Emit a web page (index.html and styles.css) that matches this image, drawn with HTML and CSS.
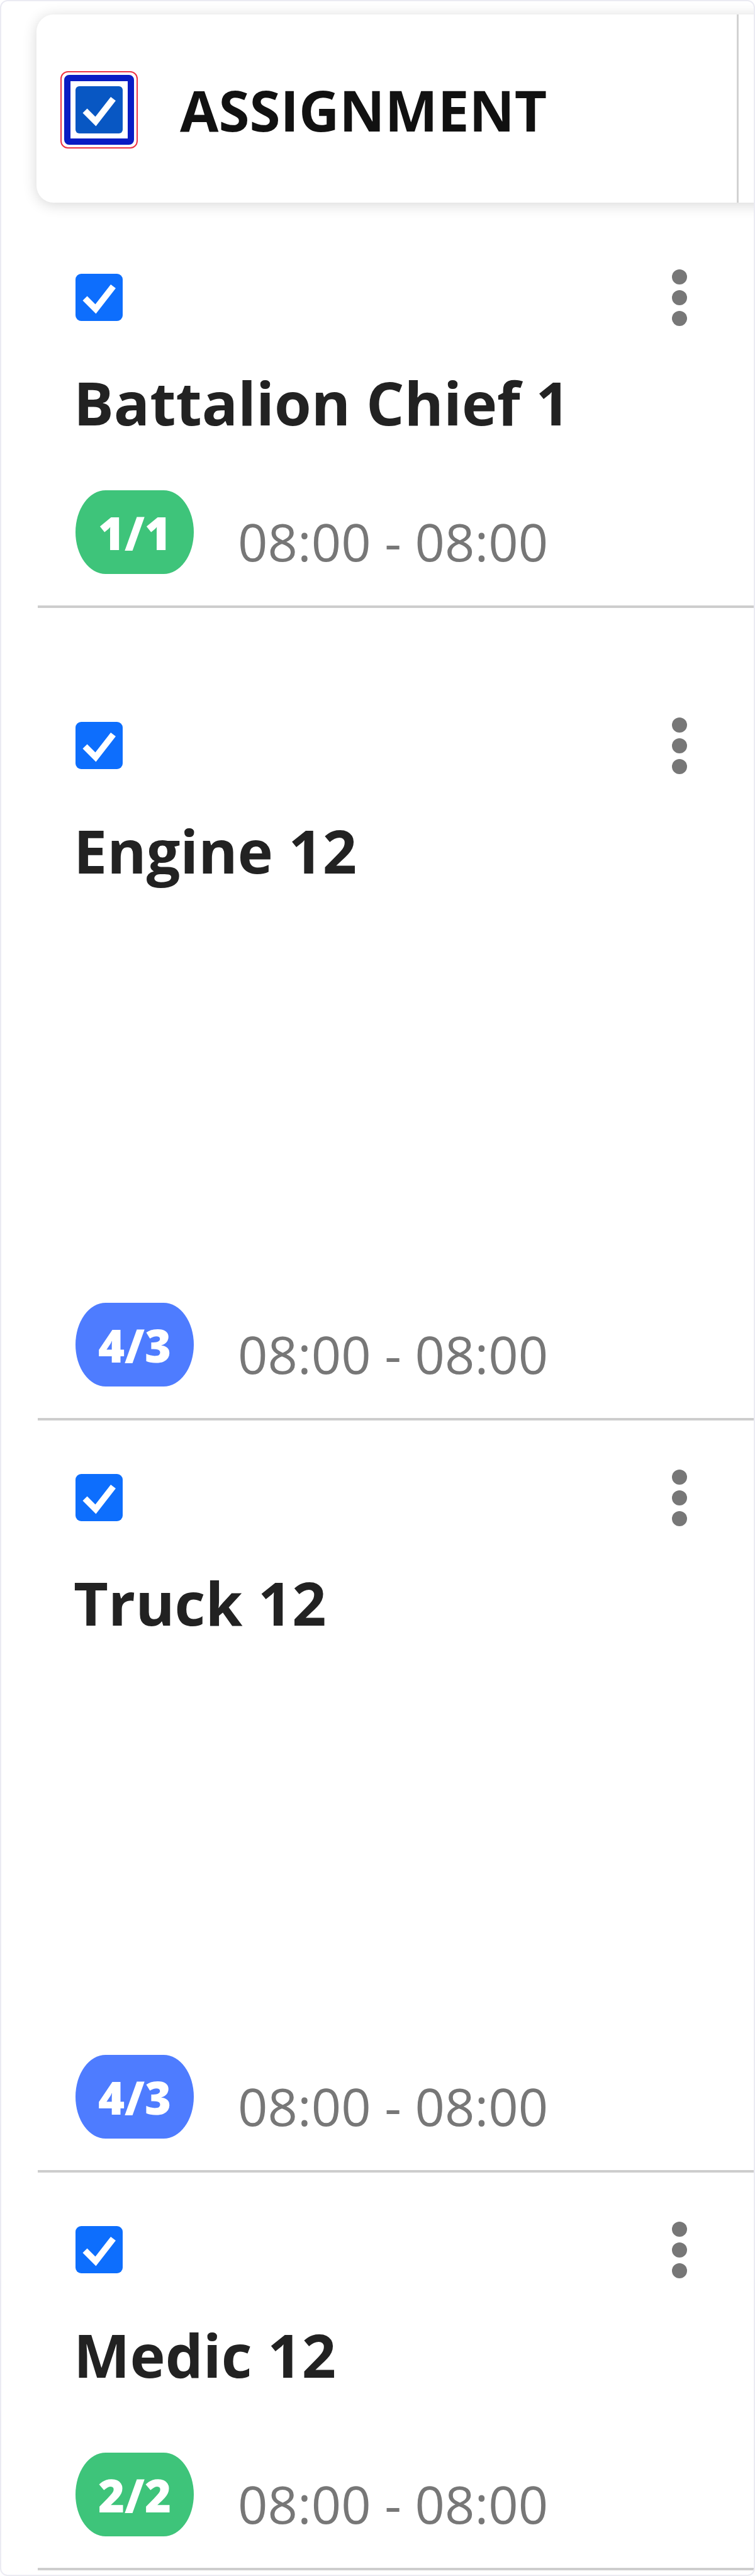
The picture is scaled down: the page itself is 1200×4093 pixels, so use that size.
FILE: index.html
```html
<!DOCTYPE html>
<html lang="en">
<head>
  <meta charset="UTF-8">
  <title>Assignments</title>
  <link rel="stylesheet" href="styles.css">
</head>
<body>
  <div class="page">
    <div class="grid-head">
      <div class="head-cell">
        <span class="focus-outline">
          <span class="focus-ring">
            <span class="check check--head">
              <svg viewBox="0 0 75 75"><path d="M15 39 L32 56 L60 20" /></svg>
            </span>
          </span>
        </span>
        <span class="head-title">ASSIGNMENT</span>
      </div>
      <div class="head-rest"></div>
    </div>

    <ul class="rows">
      <li class="row row--sm">
        <div class="row-top">
          <span class="check"><svg viewBox="0 0 75 75"><path d="M15 39 L32 56 L60 20" /></svg></span>
          <button class="kebab" type="button"><svg viewBox="0 0 26 90"><circle cx="13" cy="12" r="12"/><circle cx="13" cy="45" r="12"/><circle cx="13" cy="78" r="12"/></svg></button>
        </div>
        <h3 class="row-name">Battalion Chief 1</h3>
        <div class="row-foot">
          <span class="badge badge--ok">1/1</span>
          <span class="shift-time">08:00 - 08:00</span>
        </div>
      </li>
      <li class="row row--xl">
        <div class="row-top">
          <span class="check"><svg viewBox="0 0 75 75"><path d="M15 39 L32 56 L60 20" /></svg></span>
          <button class="kebab" type="button"><svg viewBox="0 0 26 90"><circle cx="13" cy="12" r="12"/><circle cx="13" cy="45" r="12"/><circle cx="13" cy="78" r="12"/></svg></button>
        </div>
        <h3 class="row-name">Engine 12</h3>
        <div class="row-foot">
          <span class="badge badge--over">4/3</span>
          <span class="shift-time">08:00 - 08:00</span>
        </div>
      </li>
      <li class="row row--lg">
        <div class="row-top">
          <span class="check"><svg viewBox="0 0 75 75"><path d="M15 39 L32 56 L60 20" /></svg></span>
          <button class="kebab" type="button"><svg viewBox="0 0 26 90"><circle cx="13" cy="12" r="12"/><circle cx="13" cy="45" r="12"/><circle cx="13" cy="78" r="12"/></svg></button>
        </div>
        <h3 class="row-name">Truck 12</h3>
        <div class="row-foot">
          <span class="badge badge--over">4/3</span>
          <span class="shift-time">08:00 - 08:00</span>
        </div>
      </li>
      <li class="row row--md">
        <div class="row-top">
          <span class="check"><svg viewBox="0 0 75 75"><path d="M15 39 L32 56 L60 20" /></svg></span>
          <button class="kebab" type="button"><svg viewBox="0 0 26 90"><circle cx="13" cy="12" r="12"/><circle cx="13" cy="45" r="12"/><circle cx="13" cy="78" r="12"/></svg></button>
        </div>
        <h3 class="row-name">Medic 12</h3>
        <div class="row-foot">
          <span class="badge badge--ok">2/2</span>
          <span class="shift-time">08:00 - 08:00</span>
        </div>
      </li>
    </ul>
  </div>
</body>
</html>
```

FILE: styles.css
```css
body {
  margin: 0;
  background: #fff;
  font-family: 'Open Sans', 'Noto Sans', 'Liberation Sans', sans-serif;
}
.page {
  box-sizing: border-box;
  width: 1200px;
  height: 4093px;
  border: 2px solid #ebebf3;
  border-radius: 12px;
  overflow: hidden;
  padding: 21px 0 0 56px;
  background: #fff;
}

/* header card */
.grid-head {
  display: flex;
  width: 1400px;
  height: 299px;
  background: #fff;
  border-radius: 27px 0 0 27px;
  box-shadow: 0 3px 22px rgba(0,0,0,0.16);
}
.head-cell {
  box-sizing: border-box;
  width: 1116px;
  display: flex;
  align-items: center;
  padding: 4px 0 0 38px;
  border-right: 3px solid #d2d2d2;
}
.head-rest {
  flex: 1;
}
.focus-outline {
  display: flex;
  padding: 4px;
  border: 2px solid #ee3344;
  border-radius: 12px;
}
.focus-ring {
  display: flex;
  padding: 8px;
  border: 10px solid #0a1cc4;
  border-radius: 8px;
  background: #fff;
}
.head-title {
  margin-left: 67px;
  font-size: 89px;
  font-weight: 700;
  color: #111;
  line-height: 1;
}

/* checkbox */
.check {
  display: flex;
  width: 75px;
  height: 75px;
  border-radius: 9px;
  background: #0d6efd;
}
.check--head {
  background: #0857c3;
  border-radius: 6px;
}
.check svg {
  width: 75px;
  height: 75px;
}
.check path {
  fill: none;
  stroke: #fff;
  stroke-width: 10;
  stroke-linejoin: miter;
}

/* rows */
.rows {
  list-style: none;
  margin: 28px 0 0 2px;
  padding: 0;
}
.row {
  box-sizing: border-box;
  display: flex;
  flex-direction: column;
  padding: 85px 105px 50px 60px;
  border-bottom: 4px solid #cdcdcd;
}
.row--sm { min-height: 616px; }
.row--md { min-height: 632px; }
.row--lg { min-height: 1195px; }
.row--xl { min-height: 1291px; padding-top: 181px; }

.row-top {
  display: flex;
  justify-content: space-between;
  align-items: center;
  height: 75px;
}
.kebab {
  display: flex;
  width: 26px;
  height: 90px;
  padding: 0;
  border: none;
  background: none;
  cursor: pointer;
}
.kebab svg {
  width: 26px;
  height: 90px;
  fill: #777;
}
.row-name {
  margin: 64px 0 0 -3px;
  font-size: 95px;
  font-weight: 700;
  color: #222;
  line-height: normal;
}
.row-foot {
  margin-top: auto;
  display: flex;
  align-items: flex-end;
}
.badge {
  box-sizing: border-box;
  display: flex;
  align-items: center;
  justify-content: center;
  height: 133px;
  min-width: 188px;
  padding: 0 28px;
  border-radius: 48px / 50%;
  color: #fff;
  font-size: 72px;
  font-weight: 800;
  line-height: normal;
}
.badge--ok { background: #3ec47a; }
.badge--over { background: #4e7cff; }
.shift-time {
  margin: 0 0 -4px 70px;
  font-size: 83px;
  color: #777;
  line-height: normal;
}
```
